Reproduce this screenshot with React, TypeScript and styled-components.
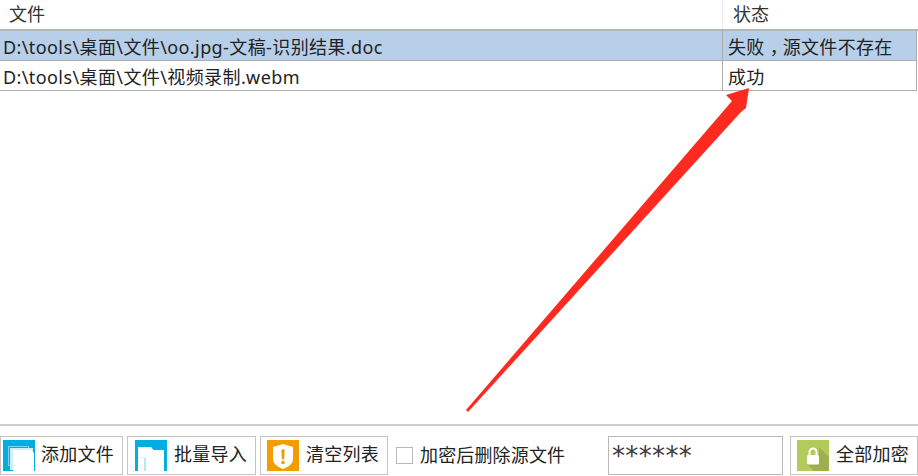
import React from "react";
import styled, { createGlobalStyle } from "styled-components";

const Global = createGlobalStyle`
  html, body { margin: 0; padding: 0; background: #fff; }
`;
const FONT = `"Noto Sans", "Noto Sans CJK SC", sans-serif`;

const Page = styled.div`
  position: relative;
  width: 918px;
  height: 476px;
  overflow: hidden;
  display: flex;
  flex-direction: column;
  font-family: ${FONT};
  color: #222;
`;
const Table = styled.div`
  flex: 1;
  border-bottom: 2px solid #cfcfcf;
  margin-bottom: 10px;
`;
const HeaderRow = styled.div`
  display: grid;
  grid-template-columns: 722px 1fr;
  height: 29px;
  border-bottom: 2px solid #b5b5b5;
`;
const HeaderCell = styled.div<{ $divider?: boolean }>`
  font-size: 18px;
  line-height: 29px;
  padding-left: ${(p) => (p.$divider ? "10px" : "9px")};
  border-left: ${(p) => (p.$divider ? "1px solid #e8e8e8" : "none")};
  color: #333;
`;
const Row = styled.div<{ $selected?: boolean }>`
  display: grid;
  grid-template-columns: 722px 1fr;
  height: 29px;
  margin-right: 1px;
  background: ${(p) => (p.$selected ? "#b7cfe9" : "#fff")};
  border-bottom: 1px solid #adadad;
  border-right: 1px solid #adadad;
`;
const Cell = styled.div`
  font-size: 18px;
  line-height: 33px;
  height: 29px;
  padding-left: 3px;
  white-space: nowrap;
  letter-spacing: 0.4px;
`;
const StatusCell = styled(Cell)`
  border-left: 1px solid #adadad;
  padding-left: 5px;
  letter-spacing: 0.33px;
`;
const CenteredComma = styled.span`
  margin-left: 5px;
  letter-spacing: -5px;
`;
const Toolbar = styled.div`
  display: flex;
  align-items: stretch;
  height: 39px;
  margin-bottom: 1px;
`;
const Button = styled.div<{ $width: number; $pad: number; $gap: number; $ml?: number }>`
  box-sizing: border-box;
  width: ${(p) => p.$width}px;
  margin-left: ${(p) => p.$ml ?? 0}px;
  border: 1px solid #c4c4c4;
  display: flex;
  align-items: center;
  padding-left: ${(p) => p.$pad}px;
  gap: ${(p) => p.$gap}px;
  font-size: 18px;
  letter-spacing: 0.25px;
  color: #222;
`;
const ButtonLabel = styled.span`
  line-height: 1;
  white-space: nowrap;
  padding-bottom: 3px;
`;
const IconBox = styled.svg`
  width: 32px;
  height: 31px;
  flex: none;
  display: block;
`;
const CheckLabel = styled.label`
  display: flex;
  align-items: center;
  gap: 7px;
  margin-left: 8px;
  font-size: 18px;
  letter-spacing: 0.15px;
  color: #222;
  width: 212px;
  white-space: nowrap;
`;
const CheckLabelText = styled.span`
  line-height: 1;
  padding-bottom: 2px;
`;
const CheckBox = styled.span`
  box-sizing: border-box;
  width: 17px;
  height: 17px;
  flex: none;
  border: 1px solid #b8b8b8;
  background: #fff;
`;
const Password = styled.div`
  box-sizing: border-box;
  width: 175px;
  border: 1px solid #b8b8b8;
  font-family: "DejaVu Sans", sans-serif;
  font-size: 26px;
  line-height: 39px;
  height: 39px;
  overflow: hidden;
  padding-left: 3px;
  color: #3a3a3a;
  letter-spacing: 0.35px;
`;
const Overlay = styled.svg`
  position: absolute;
  left: 0;
  top: 0;
  pointer-events: none;
`;

const AddIcon = () => (
  <IconBox viewBox="0 0 32 31">
    <rect width="32" height="31" fill="#00aee0" />
    <path d="M5 6h21v20H5z" fill="#7fd3ee" />
    <path d="M6 7h19v18H6z" fill="#00aee0" />
    <path d="M7 8h23v22H7z" fill="#cfeef8" />
    <path d="M10 10h18l3 3v18H10z" fill="#fff" />
  </IconBox>
);
const FolderIcon = () => (
  <IconBox viewBox="0 0 32 31">
    <rect width="32" height="31" fill="#00aee0" />
    <path d="M3 7h13l2.500 3H29v21H3z" fill="#fff" />
    <path d="M9.500 18h1v13h-1z" fill="#6fcdea" />
    <path d="M3 17h7v1H3z" fill="#dff4fa" />
  </IconBox>
);
const ShieldIcon = () => (
  <IconBox viewBox="0 0 32 31">
    <rect width="32" height="31" fill="#f29c00" />
    <path d="M16 4l10 3v12c0 5-5 8-10 10C11 27 6 24 6 19V7z" fill="#fff" />
    <path d="M14.300 9.500h3.400l-.6 10h-2.200z" fill="#f29c00" />
    <circle cx="16" cy="22.500" r="1.800" fill="#f29c00" />
  </IconBox>
);
const LockIcon = () => (
  <IconBox viewBox="0 0 32 31">
    <rect width="32" height="31" fill="#b2cb5a" />
    <path d="M10 24l7 7H32V17L22 7v8z" fill="#9db04d" />
    <path d="M11.500 15v-3a4.500 4.500 0 0 1 9 0v3h-2v-3a2.500 2.500 0 0 0-5 0v3z" fill="#fff" />
    <rect x="10" y="15" width="12" height="9.500" rx="1.500" fill="#fff" />
  </IconBox>
);

export default function App() {
  return (
    <Page>
      <Global />
      <Table>
        <HeaderRow>
          <HeaderCell>文件</HeaderCell>
          <HeaderCell $divider>状态</HeaderCell>
        </HeaderRow>
        <Row $selected>
          <Cell>D:\tools\桌面\文件\oo.jpg-文稿-识别结果.doc</Cell>
          <StatusCell>失败<CenteredComma>，</CenteredComma>源文件不存在</StatusCell>
        </Row>
        <Row>
          <Cell>D:\tools\桌面\文件\视频录制.webm</Cell>
          <StatusCell>成功</StatusCell>
        </Row>
      </Table>
      <Toolbar>
        <Button $width={123} $pad={2} $gap={6}><AddIcon /><ButtonLabel>添加文件</ButtonLabel></Button>
        <Button $width={129} $pad={7} $gap={7} $ml={4}><FolderIcon /><ButtonLabel>批量导入</ButtonLabel></Button>
        <Button $width={128} $pad={6} $gap={7} $ml={4}><ShieldIcon /><ButtonLabel>清空列表</ButtonLabel></Button>
        <CheckLabel><CheckBox /><CheckLabelText>加密后删除源文件</CheckLabelText></CheckLabel>
        <Password>******</Password>
        <Button $width={128} $pad={6} $gap={7} $ml={7}><LockIcon /><ButtonLabel>全部加密</ButtonLabel></Button>
      </Toolbar>
      <Overlay width="918" height="476" viewBox="0 0 918 476">
        <path d="M749 88L726 95 732 101 466 410 468 412 741 112 746 108z" fill="#ff2a1f" />
      </Overlay>
    </Page>
  );
}
